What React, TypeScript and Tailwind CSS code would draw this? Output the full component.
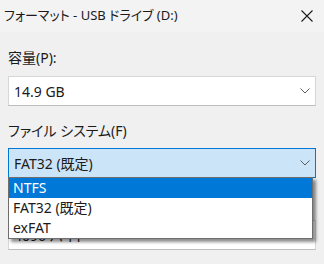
import React from "react";

const font = { fontFamily: '"Noto Sans", "Noto Sans CJK JP", sans-serif' };

function Chevron() {
  return (
    <svg width="10" height="6" viewBox="0 0 10 6" className="shrink-0">
      <path d="M0.5 0.5 L5 5 L9.5 0.5" fill="none" stroke="#5f5f5f" strokeWidth="1" />
    </svg>
  );
}

function Combo({ value, active }: { value: string; active?: boolean }) {
  return (
    <div
      className={
        active
          ? "flex h-[30px] items-center justify-between border border-[#0078d4] bg-[#cce4f7] pl-[5px] pr-[5px]"
          : "flex h-[30px] items-center justify-between border border-[#d6d6d6] border-b-[#bcbcbc] bg-white pl-[5px] pr-[5px]"
      }
    >
      <span className="text-[14px] text-[#1b1b1b]">{value}</span>
      <Chevron />
    </div>
  );
}

export default function App() {
  const options = ["NTFS", "FAT32 (既定)", "exFAT"];

  return (
    <div
      className="relative h-[264px] w-[324px] overflow-hidden bg-[#f0f0f0] [font-feature-settings:'palt']"
      style={font}
    >
      {/* Title bar */}
      <div className="flex h-[32px] items-center justify-between bg-[#f3f3f3] pl-[4px] pr-[11px]">
        <span className="text-[13px] text-[#1b1b1b]">フォーマット - USB ドライブ (D:)</span>
        <svg width="12" height="12" viewBox="0 0 12 12">
          <path d="M0.5 0.5 L11.5 11.5 M11.5 0.5 L0.5 11.5" stroke="#1b1b1b" strokeWidth="1.1" />
        </svg>
      </div>

      {/* Body */}
      <div className="flex flex-col px-[8px] pt-[16px]">
        <div className="h-[20px] text-[14px] leading-[20px] text-[#1b1b1b]">容量(P):</div>
        <div className="mt-[8px]">
          <Combo value="14.9 GB" />
        </div>

        <div className="mt-[15px] h-[20px] text-[14px] leading-[20px] text-[#1b1b1b]">ファイル システム(F)</div>
        <div className="mt-[7px]">
          <Combo value="FAT32 (既定)" active />
        </div>

        {/* label hidden behind the open list */}
        <div className="mt-[15px] h-[20px]" />
        <div className="mt-[7px]">
          <Combo value="4096 バイト" />
        </div>
      </div>

      {/* Dropdown list */}
      <div className="absolute left-[8px] top-[177px] w-[305px] border border-[#6e6e6e] bg-white shadow-[3px_3px_3px_rgba(0,0,0,0.45)]">
        {options.map((o, i) => (
          <div
            key={o}
            className={
              i === 0
                ? "h-[20px] bg-[#0078d7] pl-[4px] text-[14px] leading-[20px] text-white"
                : "h-[20px] pl-[4px] text-[14px] leading-[20px] text-[#1b1b1b]"
            }
          >
            {o}
          </div>
        ))}
      </div>
    </div>
  );
}
